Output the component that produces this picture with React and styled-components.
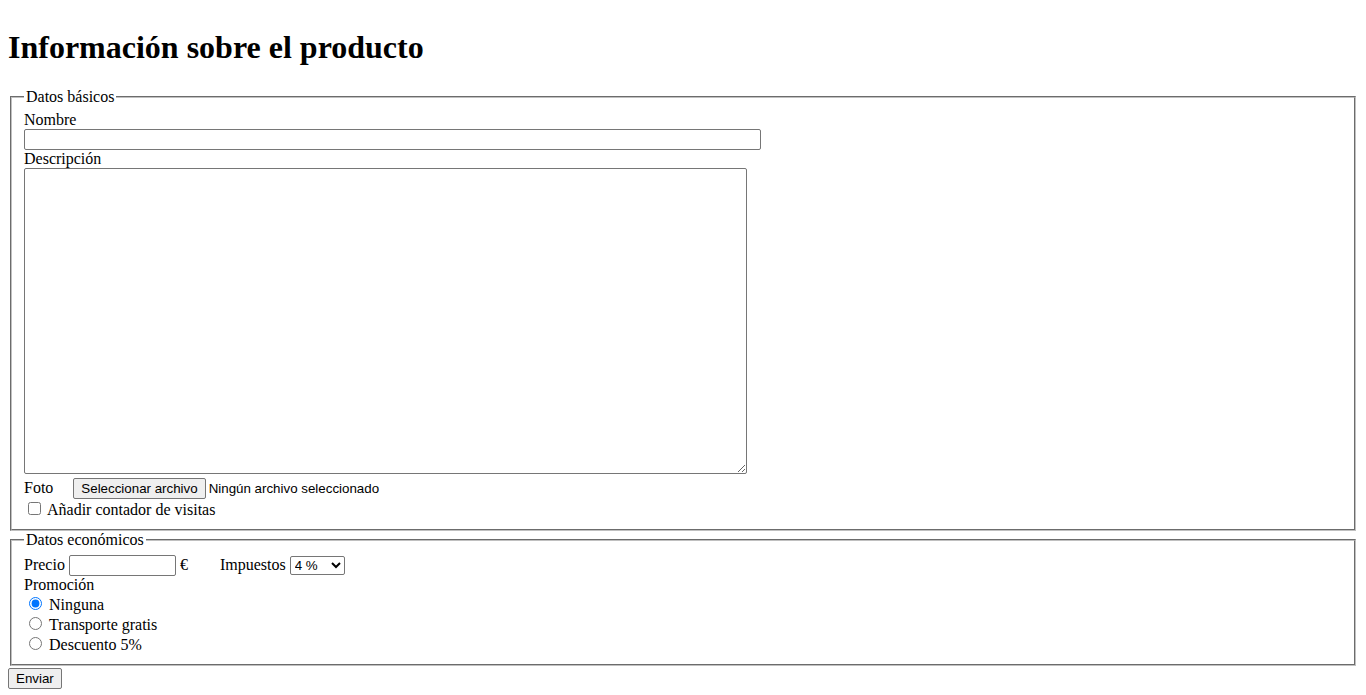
import styled, {createGlobalStyle} from "styled-components";

const GlobalStyle = createGlobalStyle`
  body {
    margin: 8px;
    font-family: "Liberation Serif", "Times New Roman", serif;
    font-size: 16px;
    color: #000;
    background: #fff;
  }
`

const Title = styled.h1`
  font-size: 32px;
  font-weight: bold;
  margin: 21.44px 0;
`

const Form = styled.form`
  margin: 0;
`

const Fieldset = styled.fieldset`
  margin: 0 2px;
  padding: 0.35em 0.75em 0.625em;
  border: 2px groove #c0c0c0;
`

const Legend = styled.legend`
  padding: 0 2px;
`

const Label = styled.label`
  display: block;
`

const Row = styled.div`
  display: block;
`

const TextInput = styled.input`
  font-family: "Liberation Sans", Arial, sans-serif;
  font-size: 13.33px;
  box-sizing: border-box;
  width: ${p => p.$width}px;
  height: 21px;
  border: 1px solid #767676;
  border-radius: 2px;
  padding: 1px 2px;
  margin: 0;
`

const TextArea = styled.textarea`
  font-family: "Liberation Mono", monospace;
  font-size: 13.33px;
  box-sizing: border-box;
  width: 723px;
  height: 306px;
  border: 1px solid #767676;
  border-radius: 2px;
  padding: 2px;
  margin: 0 0 4px;
  display: block;
`

const InlineLabel = styled.label`
  display: inline-block;
  margin-right: ${p => p.$gap || 0}px;
`

const FileButton = styled.button`
  font-family: "Liberation Sans", Arial, sans-serif;
  font-size: 13.33px;
  padding: 2px 7px;
  border: 1px solid #767676;
  border-radius: 2px;
  background: #efefef;
  color: #000;
  margin: 0 3px 0 0;
`

const FileText = styled.span`
  font-family: "Liberation Sans", Arial, sans-serif;
  font-size: 13.33px;
`

const Check = styled.input`
  margin: 3px 6px 3px 4px;
`

const Radio = styled.input`
  margin: 3px 7px 0 5px;
`

const Select = styled.select`
  font-family: "Liberation Sans", Arial, sans-serif;
  font-size: 13.33px;
  box-sizing: border-box;
  width: 55px;
  height: 19px;
  border: 1px solid #767676;
  border-radius: 2px;
  background: #fff;
  color: #000;
  padding: 0;
  margin: 0;
`

const Euro = styled.span`
  margin: 0 32px 0 4px;
`

const Submit = styled.button`
  font-family: "Liberation Sans", Arial, sans-serif;
  font-size: 13.33px;
  padding: 2px 7px;
  border: 1px solid #767676;
  border-radius: 2px;
  background: #efefef;
  color: #000;
  margin: 2px 0 0;
`

export default function App() {
    return (
        <>
            <GlobalStyle/>
            <Title>Información sobre el producto</Title>
            <Form onSubmit={e => e.preventDefault()}>
                <Fieldset>
                    <Legend>Datos básicos</Legend>
                    <Label htmlFor="nombre">Nombre</Label>
                    <Row>
                        <TextInput id="nombre" type="text" $width={737}/>
                    </Row>
                    <Label htmlFor="desc">Descripción</Label>
                    <TextArea id="desc"/>
                    <Row>
                        <InlineLabel $gap={20}>Foto</InlineLabel>
                        <FileButton type="button">Seleccionar archivo</FileButton>
                        <FileText>Ningún archivo seleccionado</FileText>
                    </Row>
                    <Row>
                        <Check type="checkbox" id="contador"/>
                        <label htmlFor="contador">Añadir contador de visitas</label>
                    </Row>
                </Fieldset>
                <Fieldset>
                    <Legend>Datos económicos</Legend>
                    <Row>
                        <InlineLabel $gap={4}>Precio</InlineLabel>
                        <TextInput type="text" $width={107}/>
                        <Euro>€</Euro>
                        <InlineLabel $gap={4}>Impuestos</InlineLabel>
                        <Select defaultValue="4">
                            <option value="4">4 %</option>
                            <option value="10">10 %</option>
                            <option value="21">21 %</option>
                        </Select>
                    </Row>
                    <Label>Promoción</Label>
                    <Row>
                        <Radio type="radio" name="promo" id="p1" defaultChecked/>
                        <label htmlFor="p1">Ninguna</label>
                    </Row>
                    <Row>
                        <Radio type="radio" name="promo" id="p2"/>
                        <label htmlFor="p2">Transporte gratis</label>
                    </Row>
                    <Row>
                        <Radio type="radio" name="promo" id="p3"/>
                        <label htmlFor="p3">Descuento 5%</label>
                    </Row>
                </Fieldset>
                <Submit type="submit">Enviar</Submit>
            </Form>
        </>
    )
}
